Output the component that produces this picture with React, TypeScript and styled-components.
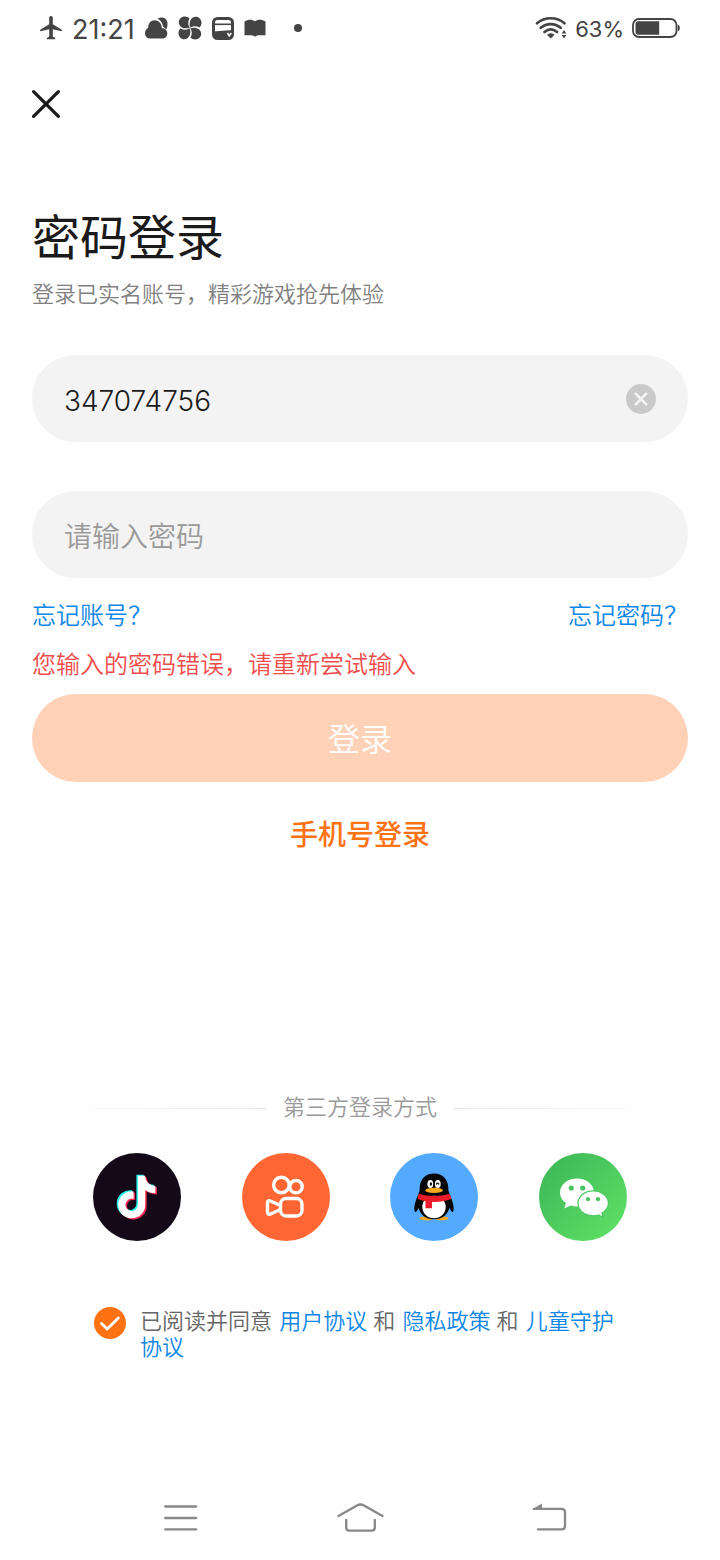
import React, { useState } from "react";
import styled, { createGlobalStyle } from "styled-components";

const GlobalStyle = createGlobalStyle`
  *, *::before, *::after { box-sizing: border-box; }
  body {
    margin: 0;
    background: #fefefe;
    color: #1a1a1a;
    font-family: "Liberation Sans", "Noto Sans CJK SC", sans-serif;
    font-weight: 350;
  }
  button, input { font: inherit; }
  button {
    padding: 0;
    border: 0;
    background: none;
    color: inherit;
    cursor: pointer;
  }
  a { text-decoration: none; }
  svg { display: block; }
`;

const Page = styled.div`
  display: flex;
  flex-direction: column;
  min-height: 100vh;
`;

const StatusBar = styled.header`
  display: flex;
  align-items: center;
  justify-content: space-between;
  height: 56px;
  padding: 0 40px;
  color: #444;
  font-family: Inter, sans-serif;
  font-weight: 400;
  line-height: 32px;
`;

const StatusGroup = styled.div<{ $gap: number }>`
  display: flex;
  align-items: center;
  gap: ${(p) => p.$gap}px;
`;

const Clock = styled.time`
  padding-top: 4px;
  font-size: 27px;
`;

const BatteryLevel = styled.span`
  padding-top: 2px;
  font-size: 22px;
`;

const Content = styled.main`
  display: flex;
  flex-direction: column;
  flex: 1;
  padding: 32px 32px 0;
`;

const CloseButton = styled.button`
  align-self: flex-start;
  width: 28px;
  height: 32px;
  margin-bottom: 83px;
`;

const Title = styled.h1`
  margin: 0;
  font-size: 48px;
  line-height: 72px;
  font-weight: 400;
`;

const Subtitle = styled.p`
  margin: 4px 0 44px;
  color: #808080;
  font-size: 22px;
  line-height: 32px;
`;

const Form = styled.form`
  display: flex;
  flex-direction: column;
`;

const Field = styled.div`
  display: flex;
  align-items: center;
  height: 87px;
  padding: 0 32px;
  border-radius: 44px;
  background: #f3f3f3;

  & + & { margin-top: 49px; }
`;

const TextInput = styled.input`
  flex: 1;
  min-width: 0;
  height: 48px;
  padding: 4px 0 0;
  border: 0;
  outline: 0;
  background: none;
  color: #1a1a1a;
  font-family: Inter, "Noto Sans CJK SC", sans-serif;
  font-size: 28px;
  font-weight: 300;

  &::placeholder { color: #999; opacity: 1; font-weight: 350; }
`;

const ClearButton = styled.button`
  width: 30px;
  height: 30px;
`;

const Links = styled.div`
  display: flex;
  justify-content: space-between;
  margin: 22px 0 16px;
`;

const Link = styled.a`
  color: #0c86e8;
`;

const HelpLink = styled(Link)`
  font-size: 24px;
  line-height: 32px;
`;

const ErrorText = styled.p`
  margin: 0 0 12px;
  color: #f04c4c;
  font-size: 24px;
  line-height: 34px;
`;

const SubmitButton = styled.button`
  height: 88px;
  padding-bottom: 2px;
  border-radius: 44px;
  background: #ffd2b8;
  color: #fff;
  font-size: 32px;
`;

const PhoneLogin = styled.button`
  align-self: center;
  margin-top: 34px;
  color: #fd7212;
  font-size: 28px;
  line-height: 40px;
  font-weight: 500;
`;

const ThirdParty = styled.section`
  margin-top: 236px;
`;

const Divider = styled.h2`
  display: flex;
  align-items: center;
  gap: 16px;
  margin: 0 48px 29px;
  color: #9a9a9a;
  font-size: 22px;
  line-height: 32px;
  font-weight: 350;
`;

const Rule = styled.span<{ $to: "left" | "right" }>`
  flex: 1;
  height: 1px;
  background: linear-gradient(to ${(p) => p.$to}, #e6e6e6, #fbfbfb);
`;

const Providers = styled.div`
  display: flex;
  justify-content: space-between;
  padding: 0 61px;
`;

const ProviderButton = styled.button<{ $fill: string }>`
  width: 88px;
  height: 88px;
  border-radius: 50%;
  background: ${(p) => p.$fill};
`;

const Agreement = styled.div`
  display: flex;
  gap: 14px;
  margin: 66px 60px 0 62px;
`;

const CheckWrap = styled.span`
  position: relative;
  flex: none;
  width: 32px;
  height: 32px;

  svg {
    position: absolute;
    inset: 0;
    pointer-events: none;
  }
`;

const Checkbox = styled.input`
  appearance: none;
  display: block;
  width: 32px;
  height: 32px;
  margin: 0;
  border: 2px solid #ccc;
  border-radius: 50%;

  &:checked { border-color: #ff7214; background: #ff7214; }
`;

const AgreementText = styled.p`
  margin: 0;
  padding-top: 2px;
  color: #666;
  font-size: 22px;
  line-height: 26px;
`;

const TermsLink = styled(Link)`
  margin-left: 1px;
`;

const NavBar = styled.nav`
  display: flex;
  justify-content: space-between;
  align-items: center;
  height: 84px;
  padding: 0 152px;
  color: #888;
`;

const NavButton = styled.button`
  width: 56px;
  height: 40px;
`;

const PlaneIcon = () => (
  <svg width="22" height="24" viewBox="0 0 22 24" fill="currentColor">
    <path d="M11 0c1.100 0 1.800.9 1.800 2v6.200l8.600 5.200c.6.500.7 1.900 0 1.900l-8.600-2v7.200l2.400 1.600v1.200H6.800v-1.200l2.400-1.600v-7.200l-8.600 2c-.7 0-.6-1.400 0-1.900l8.600-5.200V2C9.200.9 9.900 0 11 0Z" />
  </svg>
);

const CloudIcon = () => (
  <svg width="23" height="22" viewBox="0 0 23 22" fill="currentColor">
    <path d="M12.500 1.800C16.500-.8 22.500.9 22.500 6.800c0 2.500-.5 4.300-1.500 5.800-1-1.700-2.300-2.500-2.900-2.800-.6-3.900-2.600-6.600-5.600-8Z" />
    <path d="M5.500 21.500C2.200 21.500 0 19.300 0 16.200c0-2.500 1.200-4.300 3.200-5.500C3.300 6 6 3.300 9.500 3.300c4.300 0 7.200 3.300 7.300 7.700 3.300.2 5.500 2.400 5.500 5.500 0 3-2.200 5-5 5Z" />
  </svg>
);

const FanIcon = () => (
  <svg width="24" height="24" viewBox="0 0 24 24" fill="currentColor">
    {[0, 90, 180, 270].map((angle) => (
      <path
        key={angle}
        transform={`rotate(${angle} 12 12)`}
        d="M11.700 11.700C6.500 13.500.8 11.300.8 6.200.8 3 3.500.5 6.800.5c2 0 3.700.8 4.700 2C9.700 5.500 9.800 9 11.700 11.700Z"
      />
    ))}
  </svg>
);

const CardIcon = () => (
  <svg width="22" height="23" viewBox="0 0 22 23">
    <rect x="1.500" y="1.500" width="19" height="20" rx="4" fill="none" stroke="currentColor" strokeWidth="3" />
    <path d="M1 7.300h20" stroke="currentColor" strokeWidth="1.600" />
    <path d="M1 14.500 21 13v7l-3 2H3l-2-2Z" fill="currentColor" />
    <path d="m15.500 16 1.700 2.800 2-2.800" fill="none" stroke="#fff" strokeWidth="1.500" />
  </svg>
);

const BookIcon = () => (
  <svg width="22" height="18" viewBox="0 0 22 18" fill="currentColor">
    <path d="M.5 2.500C4 .2 8.500.2 11 2.300c2.500-2.100 7-2.100 10.500.2v13.700h-7.800c-1 0-1.200 1.300-2.700 1.300s-1.700-1.300-2.700-1.300H.5Z" />
  </svg>
);

const DotIcon = () => (
  <svg width="8" height="8" viewBox="0 0 8 8" fill="currentColor">
    <circle cx="4" cy="4" r="4" />
  </svg>
);

const WifiIcon = () => (
  <svg width="32" height="24" viewBox="0 0 32 24" fill="none" stroke="currentColor" strokeWidth="2.700" strokeLinecap="round">
    <path d="M2 7.200c8-6.600 19.500-6.600 27.500 0M5.700 11.800c6-5 14-5 20 0M9.500 16c4-3.300 8.500-3.300 12.500 0" />
    <path d="M12 18.800c2.300-2 5.200-2 7.500 0L15.800 22.600Z" fill="currentColor" stroke="none" />
    <path d="m29 14 2.300 3.400h-4.600ZM29 22.500l2.300-3.400h-4.600Z" fill="currentColor" stroke="none" />
  </svg>
);

const BatteryIcon = () => (
  <svg width="48" height="20" viewBox="0 0 48 20">
    <rect x="1" y="1" width="43.500" height="18" rx="6" fill="none" stroke="currentColor" strokeWidth="1.800" />
    <path d="M6.500 3.200h20.700v13.600H6.500a3 3 0 0 1-3-3V6.200a3 3 0 0 1 3-3Z" fill="currentColor" />
    <path d="M45.800 6.500c2.700.8 2.700 6.200 0 7Z" fill="currentColor" />
  </svg>
);

const CloseIcon = () => (
  <svg width="28" height="32" viewBox="0 0 28 32" fill="none" stroke="#1a1a1a" strokeWidth="3.200" strokeLinecap="round">
    <path d="m1.600 3.600 24.800 24.800M26.400 3.600 1.600 28.400" />
  </svg>
);

const ClearIcon = () => (
  <svg width="30" height="30" viewBox="0 0 30 30">
    <circle cx="15" cy="15" r="15" fill="#c9c9c9" />
    <path d="m9.700 9.700 10.600 10.600M20.300 9.700 9.700 20.300" stroke="#f6f6f6" strokeWidth="2.400" strokeLinecap="round" />
  </svg>
);

const NOTE =
  "M448,209.91a210.06,210.06,0,0,1-122.77-39.25V349.38A162.55,162.55,0,1,1,185,188.31V278.2a74.62,74.62,0,1,0,52.23,71.18V0l88,0a121.18,121.18,0,0,0,1.86,22.17h0A122.18,122.18,0,0,0,381,102.39a121.43,121.43,0,0,0,67,20.14Z";

const DouyinLogo = () => (
  <svg width="88" height="88" viewBox="0 0 88 88">
    <path d={NOTE} fill="#25f4ee" transform="translate(23.700 21.700) scale(.083)" />
    <path d={NOTE} fill="#fe2c55" transform="translate(26.700 24) scale(.083)" />
    <path d={NOTE} fill="#fff" transform="translate(25.200 22.800) scale(.083)" />
  </svg>
);

const KuaishouLogo = () => (
  <svg width="88" height="88" viewBox="0 0 88 88" fill="none" stroke="#fff" strokeWidth="3.400" strokeLinejoin="round">
    <circle cx="39.400" cy="32" r="7.800" />
    <circle cx="54" cy="33.700" r="6.200" />
    <rect x="38.500" y="45.500" width="21.500" height="17.500" rx="5.500" />
    <path d="M38 52.200 28.500 48c-1.700-.8-3 .2-3 1.800v9.400c0 1.600 1.300 2.600 3 1.800L38 56.800" />
  </svg>
);

const QqLogo = () => (
  <svg width="88" height="88" viewBox="0 0 88 88">
    <g transform="translate(.5 0)">
      <ellipse cx="36" cy="65.300" rx="7.200" ry="1.900" fill="#f5a81c" />
      <ellipse cx="51" cy="65.300" rx="7.200" ry="1.900" fill="#f5a81c" />
      <path
        d="M43.500 20.500c-8.500 0-14.300 6-14.300 14.500 0 2.300-.3 4-1.200 5.500-.8 3-4.200 9.500-4.200 15 0 3 .8 4.600 2.300 2.800l2.200-3.200c1.300 6.800 7 11.200 15.200 11.200s13.900-4.400 15.200-11.200l2.200 3.200c1.500 1.800 2.300.2 2.300-2.800 0-5.500-3.400-12-4.200-15-.9-1.500-1.200-3.200-1.200-5.500 0-8.500-5.800-14.500-14.300-14.500Z"
        fill="#070707"
      />
      <ellipse cx="43.500" cy="54" rx="11.700" ry="11.200" fill="#fff" />
      <path d="M28.500 40.800c9 3 21 3 30.200 0 1.400 1.600 2 3.400 2 5.200-10.500 4-23.500 4-33.400 0 0-1.800.2-3.600 1.200-5.200Z" fill="#ec1b2a" />
      <path d="M35 46.500 41.500 47.500V55.300H35Z" fill="#ec1b2a" />
      <ellipse cx="39.800" cy="31" rx="2.900" ry="4" fill="#fff" />
      <ellipse cx="47.300" cy="31" rx="2.900" ry="4" fill="#fff" />
      <ellipse cx="40.400" cy="31" rx="1.200" ry="1.800" fill="#111" />
      <path d="M45.800 31.600c.2-2 2.400-2 2.600 0" fill="none" stroke="#111" strokeWidth="1.200" />
      <ellipse cx="43.600" cy="37.400" rx="8.800" ry="2.700" fill="#f9a91d" />
    </g>
  </svg>
);

const WechatLogo = () => (
  <svg width="88" height="88" viewBox="0 0 88 88">
    <g fill="#fff">
      <path d="M38 25.500c-9.500 0-17 6.200-17 14 0 4.400 2.200 8 6 10.500l-1.700 5.600 6.200-3.200c2 .7 4.200 1.100 6.500 1.100 9.500 0 17-6.200 17-14s-7.500-14-17-14Z" />
      <path
        d="M54.200 37.800c-8.500 0-15.200 5.500-15.200 12.500s6.700 12.500 15.200 12.500c1.900 0 3.700-.3 5.400-.8l4.600 2.600-1.300-4.500c4-2.300 6.500-5.800 6.500-9.800 0-7-6.700-12.500-15.200-12.500Z"
        stroke="#4cc75f"
        strokeWidth="1.200"
      />
    </g>
    <g fill="#4ac45e">
      <circle cx="32.300" cy="35" r="2.600" />
      <circle cx="43.700" cy="35" r="2.600" />
      <circle cx="49" cy="46.200" r="2.100" />
      <circle cx="59" cy="46.200" r="2.100" />
    </g>
  </svg>
);

const CheckIcon = () => (
  <svg width="32" height="32" viewBox="0 0 32 32" fill="none" stroke="#fff" strokeWidth="2.800" strokeLinecap="round" strokeLinejoin="round">
    <path d="m7.500 16.500 5.700 5.500L24.300 11" />
  </svg>
);

const MenuIcon = () => (
  <svg width="56" height="40" viewBox="0 0 56 40" stroke="currentColor" strokeWidth="2.300" strokeLinecap="round">
    <path d="M13.200 8.500h31M13.200 20h31M13.200 31.400h31" />
  </svg>
);

const HomeIcon = () => (
  <svg width="56" height="40" viewBox="0 0 56 40" fill="none" stroke="currentColor" strokeWidth="2.300" strokeLinecap="round" strokeLinejoin="round">
    <path d="M6.500 18 25 7.500q3.500-2 7 0L50.500 18M14.200 22v7.500q0 3.200 3.200 3.200h22.200q3.200 0 3.200-3.200V22" />
  </svg>
);

const BackIcon = () => (
  <svg width="56" height="40" viewBox="0 0 56 40" fill="none" stroke="currentColor" strokeWidth="2.300" strokeLinecap="round">
    <path d="M22 10.800h27.500q3.500 0 3.500 3.500v13.600q0 3.500-3.500 3.500H26" />
    <path d="M20 11.500 30 5.500v6Z" fill="currentColor" stroke="none" />
  </svg>
);

const providers = [
  { name: "抖音", fill: "#140918", Logo: DouyinLogo },
  { name: "快手", fill: "#ff6633", Logo: KuaishouLogo },
  { name: "QQ", fill: "#54aaff", Logo: QqLogo },
  { name: "微信", fill: "linear-gradient(135deg, #3fbb59 15%, #5edf65 90%)", Logo: WechatLogo },
];

export default function App() {
  const [account, setAccount] = useState("347074756");
  const [password, setPassword] = useState("");
  const [agreed, setAgreed] = useState(true);

  return (
    <Page>
      <GlobalStyle />
      <StatusBar>
        <StatusGroup $gap={10}>
          <PlaneIcon />
          <Clock>21:21</Clock>
          <CloudIcon />
          <FanIcon />
          <CardIcon />
          <StatusGroup $gap={28}>
            <BookIcon />
            <DotIcon />
          </StatusGroup>
        </StatusGroup>
        <StatusGroup $gap={8}>
          <WifiIcon />
          <BatteryLevel>63%</BatteryLevel>
          <BatteryIcon />
        </StatusGroup>
      </StatusBar>

      <Content>
        <CloseButton type="button" aria-label="关闭">
          <CloseIcon />
        </CloseButton>
        <Title>密码登录</Title>
        <Subtitle>登录已实名账号，精彩游戏抢先体验</Subtitle>

        <Form onSubmit={(e) => e.preventDefault()}>
          <Field>
            <TextInput
              type="text"
              aria-label="账号"
              value={account}
              onChange={(e) => setAccount(e.target.value)}
            />
            <ClearButton type="button" aria-label="清除账号" onClick={() => setAccount("")}>
              <ClearIcon />
            </ClearButton>
          </Field>
          <Field>
            <TextInput
              type="password"
              aria-label="密码"
              placeholder="请输入密码"
              value={password}
              onChange={(e) => setPassword(e.target.value)}
            />
          </Field>
          <Links>
            <HelpLink href="#account">忘记账号？</HelpLink>
            <HelpLink href="#password">忘记密码？</HelpLink>
          </Links>
          <ErrorText role="alert">您输入的密码错误，请重新尝试输入</ErrorText>
          <SubmitButton type="submit">登录</SubmitButton>
          <PhoneLogin type="button">手机号登录</PhoneLogin>
        </Form>

        <ThirdParty>
          <Divider>
            <Rule $to="left" />
            第三方登录方式
            <Rule $to="right" />
          </Divider>
          <Providers>
            {providers.map(({ name, fill, Logo }) => (
              <ProviderButton key={name} type="button" aria-label={name} $fill={fill}>
                <Logo />
              </ProviderButton>
            ))}
          </Providers>
        </ThirdParty>

        <Agreement>
          <CheckWrap>
            <Checkbox
              id="agree"
              type="checkbox"
              checked={agreed}
              onChange={(e) => setAgreed(e.target.checked)}
            />
            {agreed && <CheckIcon />}
          </CheckWrap>
          <AgreementText>
            <label htmlFor="agree">已阅读并同意</label> <TermsLink href="#terms">用户协议</TermsLink> 和{" "}
            <TermsLink href="#privacy">隐私政策</TermsLink> 和{" "}
            <TermsLink href="#children">儿童守护协议</TermsLink>
          </AgreementText>
        </Agreement>
      </Content>

      <NavBar>
        <NavButton type="button" aria-label="菜单">
          <MenuIcon />
        </NavButton>
        <NavButton type="button" aria-label="主页">
          <HomeIcon />
        </NavButton>
        <NavButton type="button" aria-label="返回">
          <BackIcon />
        </NavButton>
      </NavBar>
    </Page>
  );
}
